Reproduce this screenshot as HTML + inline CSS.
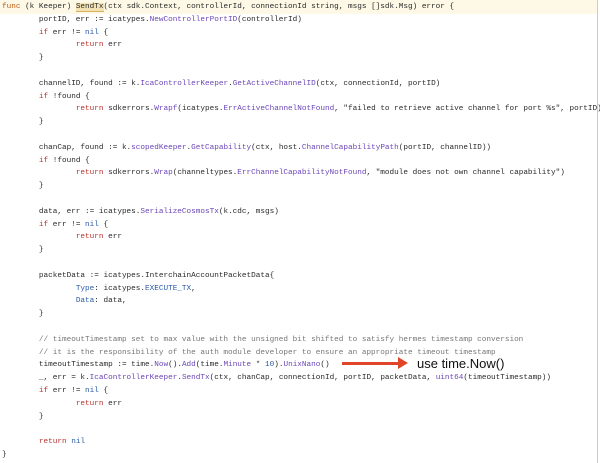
<!DOCTYPE html>
<html><head><style>
body{margin:0;width:600px;height:463px;background:#fff;overflow:hidden;position:relative}
pre{margin:0;position:absolute;left:2px;top:1px;font-family:"Liberation Mono",monospace;font-size:7.7px;line-height:12.8px;color:#2a2a2a;tab-size:8}
.k{color:#b8322e}.f{color:#6b46b8}.b{color:#2b5ba8}.c{color:#777}.o{color:#c05a14}
.hl{background:#f3e2b3;border-bottom:1px solid #d8b060}
.l1{position:absolute;left:0;top:0;width:597px;height:14px;background:#fdf9e6}
.rb{position:absolute;left:597px;top:0;width:1px;height:463px;background:#ccc}
.arrow{position:absolute;left:342px;top:362px;width:58px;height:3px;background:#e0452a}
.ah{position:absolute;left:398px;top:357px;width:0;height:0;border-left:10px solid #e0452a;border-top:6px solid transparent;border-bottom:6px solid transparent}
.t{position:absolute;left:417px;top:356px;font-family:"Liberation Sans",sans-serif;font-size:13px;color:#111}
</style></head><body>
<div class="l1"></div><div class="rb"></div>
<pre><span class="o">func</span> (k Keeper) <span class="hl">SendTx</span>(ctx sdk.Context, controllerId, connectionId string, msgs []sdk.Msg) error {
	portID, err := icatypes.<span class="f">NewControllerPortID</span>(controllerId)
	<span class="k">if</span> err != <span class="b">nil</span> {
		<span class="k">return</span> err
	}

	channelID, found := k.<span class="f">IcaControllerKeeper</span>.<span class="f">GetActiveChannelID</span>(ctx, connectionId, portID)
	<span class="k">if</span> !found {
		<span class="k">return</span> sdkerrors.<span class="f">Wrapf</span>(icatypes.<span class="f">ErrActiveChannelNotFound</span>, "failed to retrieve active channel for port %s", portID)
	}

	chanCap, found := k.<span class="f">scopedKeeper</span>.<span class="f">GetCapability</span>(ctx, host.<span class="f">ChannelCapabilityPath</span>(portID, channelID))
	<span class="k">if</span> !found {
		<span class="k">return</span> sdkerrors.<span class="f">Wrap</span>(channeltypes.<span class="f">ErrChannelCapabilityNotFound</span>, "module does not own channel capability")
	}

	data, err := icatypes.<span class="f">SerializeCosmosTx</span>(k.cdc, msgs)
	<span class="k">if</span> err != <span class="b">nil</span> {
		<span class="k">return</span> err
	}

	packetData := icatypes.InterchainAccountPacketData{
		<span class="b">Type</span>: icatypes.<span class="b">EXECUTE_TX</span>,
		<span class="b">Data</span>: data,
	}

	<span class="c">// timeoutTimestamp set to max value with the unsigned bit shifted to satisfy hermes timestamp conversion</span>
	<span class="c">// it is the responsibility of the auth module developer to ensure an appropriate timeout timestamp</span>
	timeoutTimestamp := time.<span class="f">Now</span>().<span class="f">Add</span>(time.<span class="f">Minute</span> * <span class="b">10</span>).<span class="f">UnixNano</span>()
	_, err = k.<span class="f">IcaControllerKeeper</span>.<span class="f">SendTx</span>(ctx, chanCap, connectionId, portID, packetData, <span class="f">uint64</span>(timeoutTimestamp))
	<span class="k">if</span> err != <span class="b">nil</span> {
		<span class="k">return</span> err
	}

	<span class="k">return</span> <span class="b">nil</span>
}</pre>
<div class="arrow"></div><div class="ah"></div>
<div class="t">use time.Now()</div>
</body></html>
